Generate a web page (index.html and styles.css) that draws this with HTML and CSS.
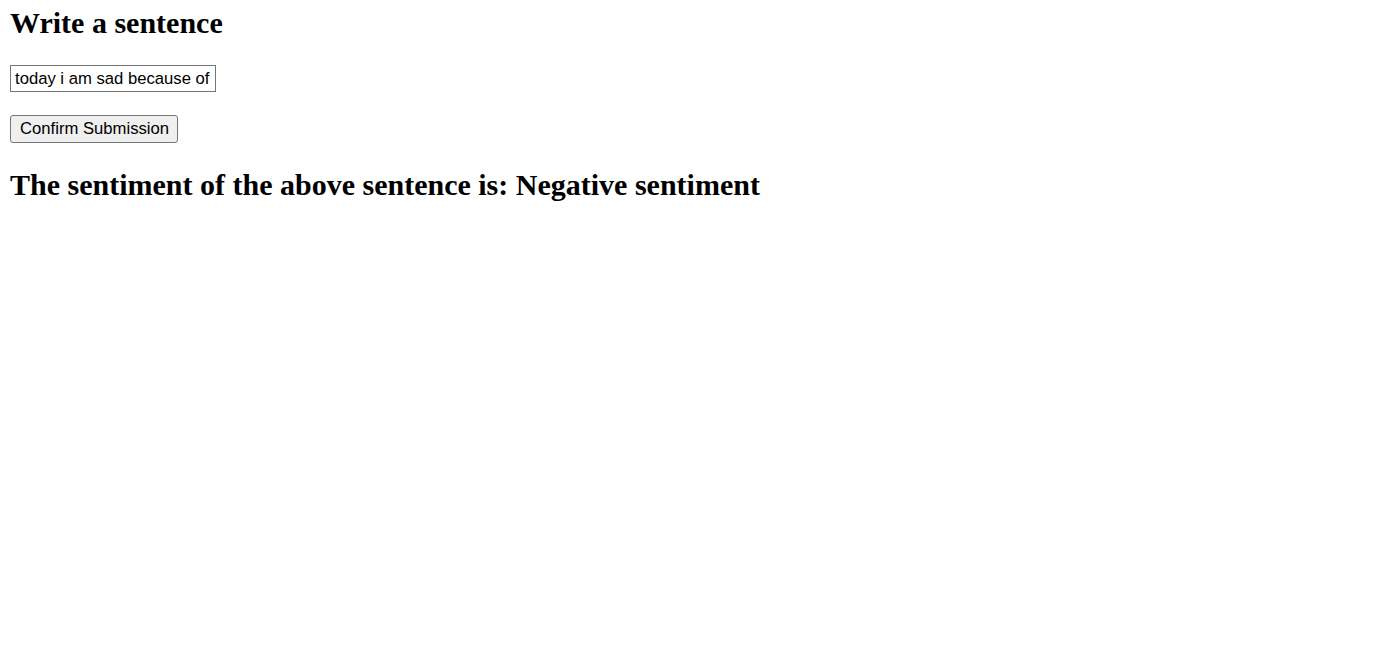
FILE: index.html
```html
<!DOCTYPE html>
<html>
<head>
<meta charset="utf-8">
<title>Sentiment</title>
<link rel="stylesheet" href="styles.css">
</head>
<body>
<main class="page">
  <h2 class="title">Write a sentence</h2>
  <form class="form">
    <input class="field" type="text" value="today i am sad because of my exam">
    <button class="submit" type="button">Confirm Submission</button>
  </form>
  <h2 class="result">The sentiment of the above sentence is: Negative sentiment</h2>
</main>
</body>
</html>
```

FILE: styles.css
```css
html, body {
  margin: 0;
  padding: 0;
  background: #ffffff;
}

.page {
  padding: 6px 10px 0 10px;
  font-family: "Liberation Serif", "Times New Roman", serif;
  color: #000000;
}

.title,
.result {
  margin: 0;
  font-size: 30px;
  line-height: 34px;
  font-weight: bold;
}

.form {
  display: flex;
  flex-direction: column;
  align-items: flex-start;
  gap: 23px;
  margin-top: 25px;
}

.field {
  box-sizing: border-box;
  width: 206px;
  height: 27px;
  margin: 0;
  padding: 2px 3px 1px 4px;
  border: 1px solid #767676;
  border-radius: 0;
  font-family: "Liberation Sans", Arial, sans-serif;
  font-size: 16.67px;
  color: #000000;
  background: #ffffff;
  outline: none;
}

.submit {
  box-sizing: border-box;
  height: 28px;
  margin: 0;
  padding: 1px 8px 2px 9px;
  border: 1px solid #767676;
  border-radius: 3px;
  background: #efefef;
  font-family: "Liberation Sans", Arial, sans-serif;
  font-size: 16.67px;
  color: #000000;
}

.result {
  margin-top: 25px;
}
```
